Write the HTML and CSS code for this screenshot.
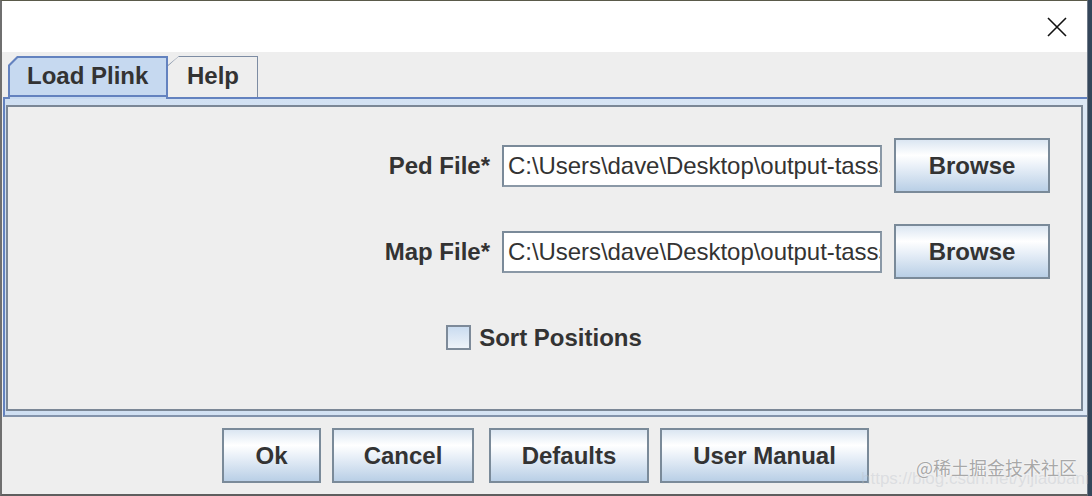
FILE: index.html
```html
<!DOCTYPE html>
<html>
<head>
<meta charset="utf-8">
<link rel="stylesheet" href="styles.css">
</head>
<body>
<div class="window">
  <div class="titlebar">
    <svg class="close" width="20" height="20" viewBox="0 0 20 20"><path d="M1 1 L19 19 M19 1 L1 19" stroke="#111" stroke-width="1.6" fill="none"/></svg>
  </div>
  <div class="tabrow">
    <div class="tab-lead"></div>
    <div class="tab-sel"><div class="tab-sel-face">Load Plink</div></div>
    <div class="tab-help"><div class="tab-help-face">Help</div></div>
    <div class="tab-fill"></div>
  </div>
  <div class="tabpane">
    <div class="panel">
      <div class="file-row">
        <span class="label">Ped File*</span>
        <div class="field"><span class="field-text">C:\Users\dave\Desktop\output-tasss</span></div>
        <div class="btn btn-browse">Browse</div>
      </div>
      <div class="file-row">
        <span class="label">Map File*</span>
        <div class="field"><span class="field-text">C:\Users\dave\Desktop\output-tasss</span></div>
        <div class="btn btn-browse">Browse</div>
      </div>
      <div class="check-row">
        <span class="checkbox"></span>
        <span class="label">Sort Positions</span>
      </div>
    </div>
  </div>
  <div class="bottombar">
    <div class="btn btn-ok">Ok</div>
    <div class="btn btn-cancel">Cancel</div>
    <div class="btn btn-defaults">Defaults</div>
    <div class="btn btn-manual">User Manual</div>
  </div>
  <div class="watermark"><span class="wm-url">https://blog.csdn.net/yijiaobani</span><span class="wm-main">@稀土掘金技术社区</span></div>
</div>
</body>
</html>
```
FILE: styles.css
```css
* { box-sizing: border-box; }
html, body {
  margin: 0;
  padding: 0;
}
body {
  width: 1092px;
  height: 496px;
  overflow: hidden;
  background: #34465a;
  font-family: "Liberation Sans", Arial, sans-serif;
  color: #333333;
}
.window {
  position: relative;
  width: 1088px;
  height: 496px;
  background: #eeeeee;
  border-left: 2px solid #6f6f6f;
  border-right: 1px solid #6f7a88;
  border-top: 1px solid #5a5a4a;
  border-bottom: 2px solid #5e5e5e;
  display: flex;
  flex-direction: column;
}
.titlebar {
  height: 51px;
  background: #ffffff;
  display: flex;
  align-items: center;
  justify-content: flex-end;
  padding-right: 20px;
  flex: none;
}
.close { display: block; }

.tabrow {
  margin-top: 4px;
  height: 43px;
  display: flex;
  align-items: flex-end;
  flex: none;
}
.tab-lead {
  width: 5px;
  height: 2px;
  margin-left: 1px;
  background: #6382bf;
}
.tab-sel {
  width: 160px;
  height: 43px;
  background: #6382bf;
  padding: 2px 2px 0 2px;
  display: flex;
  clip-path: polygon(9px 0, 100% 0, 100% 100%, 0 100%, 0 9px);
  position: relative;
  z-index: 1;
}
.tab-sel-face {
  flex: 1;
  clip-path: polygon(8px 0, 100% 0, 100% 100%, 0 100%, 0 8px);
  background: linear-gradient(to bottom, #c6d9f0 0, #c6d9f0 calc(100% - 4px), #6382bf calc(100% - 4px), #6382bf calc(100% - 2px), #c6d9f0 calc(100% - 2px));
  font-weight: bold;
  font-size: 24px;
  padding-left: 17px;
  padding-top: 4px;
  line-height: 28px;
}
.tab-help {
  width: 90px;
  height: 43px;
  background: #7d8ca3;
  background-clip: padding-box;
  border-bottom: 2px solid #6382bf;
  padding: 1px 1px 0 0;
  display: flex;
  clip-path: polygon(11px 0, 100% 0, 100% 100%, 0 100%, 0 9px);
}
.tab-help-face {
  flex: 1;
  background: #eeeeee;
  clip-path: polygon(10px 0, 100% 0, 100% 100%, 0 100%, 0 9px);
  font-weight: bold;
  font-size: 24px;
  padding-left: 19px;
  padding-top: 5px;
  line-height: 28px;
}
.tab-fill {
  flex: 1;
  height: 2px;
  background: #6382bf;
}

.tabpane {
  margin-left: 1px;
  border-left: 2px solid #6382bf;
  border-bottom: 2px solid #8393ab;
  background: linear-gradient(to right, #cfdff2, #dde8f5);
  padding: 6px 4px 4px 1px;
  flex: none;
}
.panel {
  height: 306px;
  border: 2px solid #7b8796;
  background: #eeeeee;
  display: flex;
  flex-direction: column;
  gap: 31px;
  padding-top: 31px;
}
.file-row {
  height: 55px;
  display: flex;
  align-items: center;
  justify-content: flex-end;
  padding-right: 31px;
}
.label {
  font-weight: bold;
  font-size: 24px;
  line-height: 28px;
  color: #333333;
}
.file-row .label { margin-right: 12px; }
.field {
  width: 380px;
  height: 42px;
  background: #ffffff;
  border-top: 2px solid #7a8a99;
  border-left: 2px solid #7a8a99;
  border-right: 2px solid #8a98a6;
  border-bottom: 2px solid #8a98a6;
  box-shadow: inset -1px -1px 0 #ffffff;
  display: flex;
  align-items: center;
  padding-left: 4px;
  margin-right: 12px;
}
.field-text {
  display: block;
  width: 100%;
  overflow: hidden;
  white-space: nowrap;
  font-size: 24px;
  letter-spacing: -0.05px;
  color: #333333;
  line-height: 28px;
}
.btn {
  height: 55px;
  border: 2px solid #7a8a99;
  background: linear-gradient(to bottom, #dbe6f2 0%, #ffffff 30%, #e6eef7 55%, #b9cfe6 100%);
  display: flex;
  align-items: center;
  justify-content: center;
  font-weight: bold;
  font-size: 24px;
  color: #333333;
  flex: none;
}
.btn-browse { width: 156px; }
.check-row {
  height: 55px;
  display: flex;
  align-items: center;
  justify-content: center;
  gap: 8px;
  padding-left: 2px;
  padding-right: 3px;
}
.checkbox {
  width: 25px;
  height: 25px;
  border: 2px solid #7d8a99;
  background: linear-gradient(to bottom, #cadcf0, #eef3f9);
}
.bottombar {
  display: flex;
  justify-content: center;
  gap: 11px;
  padding-top: 11px;
  padding-left: 2px;
}
.btn-ok { width: 99px; }
.btn-cancel { width: 142px; margin-right: 4px; }
.btn-defaults { width: 160px; }
.btn-manual { width: 209px; }

.watermark {
  position: absolute;
  right: 6px;
  bottom: 6px;
  height: 32px;
  width: 220px;
}
.wm-url {
  position: absolute;
  left: 0;
  bottom: 0;
  font-size: 17px;
  line-height: 18px;
  color: rgba(190, 196, 204, 0.4);
  white-space: nowrap;
}
.wm-main {
  position: absolute;
  right: 4px;
  top: 0;
  font-family: "Noto Sans CJK SC", "Liberation Sans", sans-serif;
  font-size: 18px;
  line-height: 22px;
  color: #a8a8a8;
  text-shadow: 0 0 2px #ffffff, 0 0 1px #ffffff;
  white-space: nowrap;
}
```
